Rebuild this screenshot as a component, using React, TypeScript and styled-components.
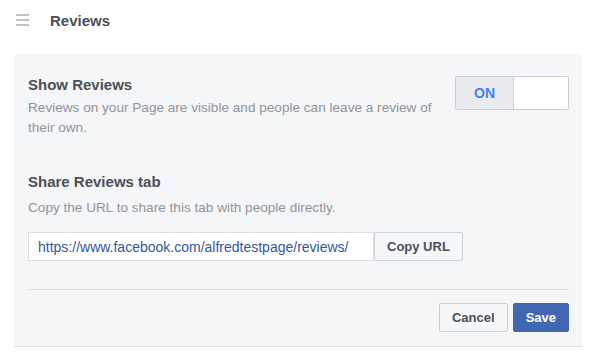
import React from 'react';
import styled, { createGlobalStyle } from 'styled-components';

const GlobalStyle = createGlobalStyle`
    body {
        margin: 0;
        background: #fff;
        font-family: Helvetica, 'Liberation Sans', Arial, sans-serif;
        -webkit-font-smoothing: antialiased;
    }
`;

const Page = styled.div`
    width: 595px;
    height: 359px;
    background: #fff;
`;

const TopBar = styled.div`
    display: flex;
    align-items: center;
    height: 40px;
    padding: 0 0 0 16px;
    gap: 21px;
`;

const Burger = styled.div`
    display: flex;
    flex-direction: column;
    gap: 3px;
    width: 13px;

    span {
        display: block;
        height: 2px;
        background: #bec2c9;
    }
`;

const PageTitle = styled.h1`
    margin: 0;
    font-size: 15px;
    font-weight: 600;
    color: #4b4f56;
`;

const Panel = styled.div`
    margin: 14px 13px 0 14px;
    background: #f5f6f7;
    border-bottom: 1px solid #dddfe2;
    padding: 21px 13px 14px 14px;
`;

const Row = styled.div`
    display: flex;
    justify-content: space-between;
    align-items: flex-start;
`;

const Section = styled.div<{ $gap?: number }>`
    margin-top: ${(p) => p.$gap ?? 0}px;
`;

const Heading = styled.div`
    font-size: 15px;
    font-weight: 600;
    color: #4b4f56;
    line-height: 20px;
`;

const Desc = styled.div<{ $gap?: number }>`
    font-size: 13.6px;
    color: #90949c;
    line-height: 20px;
    margin-top: ${(p) => p.$gap ?? 3}px;
    max-width: 410px;
`;

const Toggle = styled.div`
    display: flex;
    width: 114px;
    height: 34px;
    margin-top: 1px;
    border: 1px solid #ccd0d5;
    border-radius: 2px;
    box-sizing: border-box;
    overflow: hidden;
    flex-shrink: 0;
`;

const ToggleHalf = styled.div<{ $on?: boolean }>`
    flex: ${(p) => (p.$on ? '0 0 57px' : '1')};
    display: flex;
    align-items: center;
    justify-content: center;
    background: ${(p) => (p.$on ? '#e9ebee' : '#fff')};
    border-right: ${(p) => (p.$on ? '1px solid #ccd0d5' : 'none')};
    color: #4080ff;
    font-size: 14px;
    font-weight: 600;
`;

const CopyRow = styled.div`
    display: flex;
    margin-top: 14px;
`;

const UrlBox = styled.div`
    width: 346px;
    height: 29px;
    box-sizing: border-box;
    border: 1px solid #dddfe2;
    background: #fff;
    display: flex;
    align-items: center;
    padding-left: 9px;
    font-size: 14px;
    color: #365899;
`;

const Button = styled.button<{ $primary?: boolean }>`
    height: 29px;
    padding: 0 12px;
    border-radius: 2px;
    border: 1px solid ${(p) => (p.$primary ? '#4267b2' : '#ccd0d5')};
    background: ${(p) => (p.$primary ? '#4267b2' : '#f6f7f9')};
    color: ${(p) => (p.$primary ? '#fff' : '#4b4f56')};
    font-family: Helvetica, 'Liberation Sans', Arial, sans-serif;
    font-size: 13px;
    font-weight: 700;
    cursor: pointer;
    box-sizing: border-box;
`;

const Divider = styled.div`
    height: 1px;
    background: #dddfe2;
    margin-top: 28px;
`;

const Footer = styled.div`
    display: flex;
    justify-content: flex-end;
    gap: 5px;
    margin-top: 13px;
`;

export default function App() {
    return (
        <Page>
            <GlobalStyle />
            <TopBar>
                <Burger>
                    <span />
                    <span />
                    <span />
                </Burger>
                <PageTitle>Reviews</PageTitle>
            </TopBar>

            <Panel>
                <Row>
                    <div>
                        <Heading>Show Reviews</Heading>
                        <Desc>Reviews on your Page are visible and people can leave a review of their own.</Desc>
                    </div>
                    <Toggle>
                        <ToggleHalf $on>ON</ToggleHalf>
                        <ToggleHalf />
                    </Toggle>
                </Row>

                <Section $gap={34}>
                    <Heading>Share Reviews tab</Heading>
                    <Desc $gap={6}>Copy the URL to share this tab with people directly.</Desc>
                    <CopyRow>
                        <UrlBox>https://www.facebook.com/alfredtestpage/reviews/</UrlBox>
                        <Button>Copy URL</Button>
                    </CopyRow>
                </Section>

                <Divider />
                <Footer>
                    <Button>Cancel</Button>
                    <Button $primary>Save</Button>
                </Footer>
            </Panel>
        </Page>
    );
}
